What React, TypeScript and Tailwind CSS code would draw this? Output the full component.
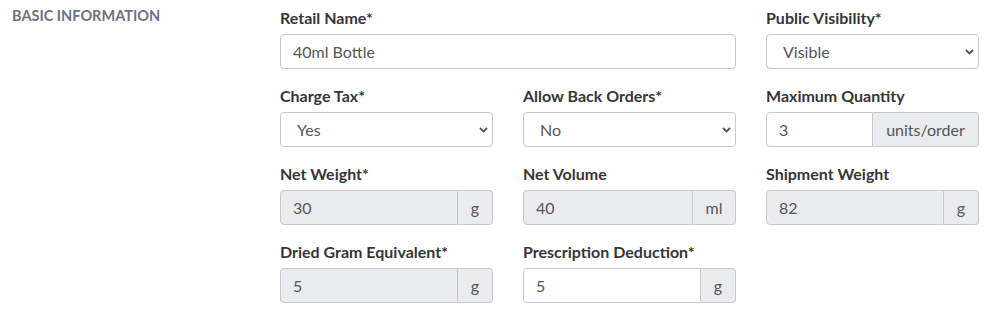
import { ReactNode } from "react";

function Label({ children }: { children: ReactNode }) {
    return <label className="block h-6 mb-1 text-base leading-6 font-bold text-[#363636]">{children}</label>;
}

function TextInput({ value, disabled }: { value: string; disabled?: boolean }) {
    return (
        <input
            readOnly
            value={value}
            className={`block w-full h-[35px] border border-[#c8c8c8] rounded pl-3 text-base text-[#555] outline-none ${disabled ? "bg-[#e9ebee]" : "bg-white"}`}
        />
    );
}

function Select({ value }: { value: string }) {
    return (
        <div className="relative">
            <select
                value={value}
                onChange={() => {}}
                className="block w-full h-[35px] appearance-none border border-[#c8c8c8] rounded bg-white pl-4 text-base text-[#555] outline-none"
            >
                <option>{value}</option>
            </select>
            <svg className="absolute right-[5px] top-[15px] pointer-events-none" width="9" height="6" viewBox="0 0 9 6">
                <path d="M1 1l3.5 3.5L8 1" fill="none" stroke="#555" strokeWidth="1.8" />
            </svg>
        </div>
    );
}

function AddonInput({ value, unit, disabled, unitWidth }: { value: string; unit: string; disabled?: boolean; unitWidth: string }) {
    return (
        <div className="flex h-[35px]">
            <input
                readOnly
                value={value}
                className={`block flex-1 min-w-0 border border-[#c8c8c8] rounded-l pl-3 text-base text-[#555] outline-none ${disabled ? "bg-[#e9ebee]" : "bg-white"}`}
            />
            <span className={`${unitWidth} flex items-center justify-center border border-l-0 border-[#c8c8c8] rounded-r bg-[#e9ebee] text-base text-[#555]`}>
                {unit}
            </span>
        </div>
    );
}

export default function App() {
    return (
        <div className="flex bg-white w-[993px] h-[312px] pt-[6px] font-['Lato',sans-serif]">
            <div className="w-[280px] pl-3">
                <h3 className="text-[14.5px] leading-5 font-bold uppercase text-[#6b7280]">Basic Information</h3>
            </div>
            <div className="w-[699px] grid grid-cols-3 content-start gap-x-[30px] gap-y-[15px]">
                <div className="col-span-2">
                    <Label>Retail Name*</Label>
                    <TextInput value="40ml Bottle" />
                </div>
                <div>
                    <Label>Public Visibility*</Label>
                    <Select value="Visible" />
                </div>

                <div>
                    <Label>Charge Tax*</Label>
                    <Select value="Yes" />
                </div>
                <div>
                    <Label>Allow Back Orders*</Label>
                    <Select value="No" />
                </div>
                <div>
                    <Label>Maximum Quantity</Label>
                    <AddonInput value="3" unit="units/order" unitWidth="w-[106px]" />
                </div>

                <div>
                    <Label>Net Weight*</Label>
                    <AddonInput value="30" unit="g" disabled unitWidth="w-[35px]" />
                </div>
                <div>
                    <Label>Net Volume</Label>
                    <AddonInput value="40" unit="ml" disabled unitWidth="w-[43px]" />
                </div>
                <div>
                    <Label>Shipment Weight</Label>
                    <AddonInput value="82" unit="g" disabled unitWidth="w-[35px]" />
                </div>

                <div>
                    <Label>Dried Gram Equivalent*</Label>
                    <AddonInput value="5" unit="g" disabled unitWidth="w-[35px]" />
                </div>
                <div>
                    <Label>Prescription Deduction*</Label>
                    <AddonInput value="5" unit="g" unitWidth="w-[35px]" />
                </div>
            </div>
        </div>
    );
}
